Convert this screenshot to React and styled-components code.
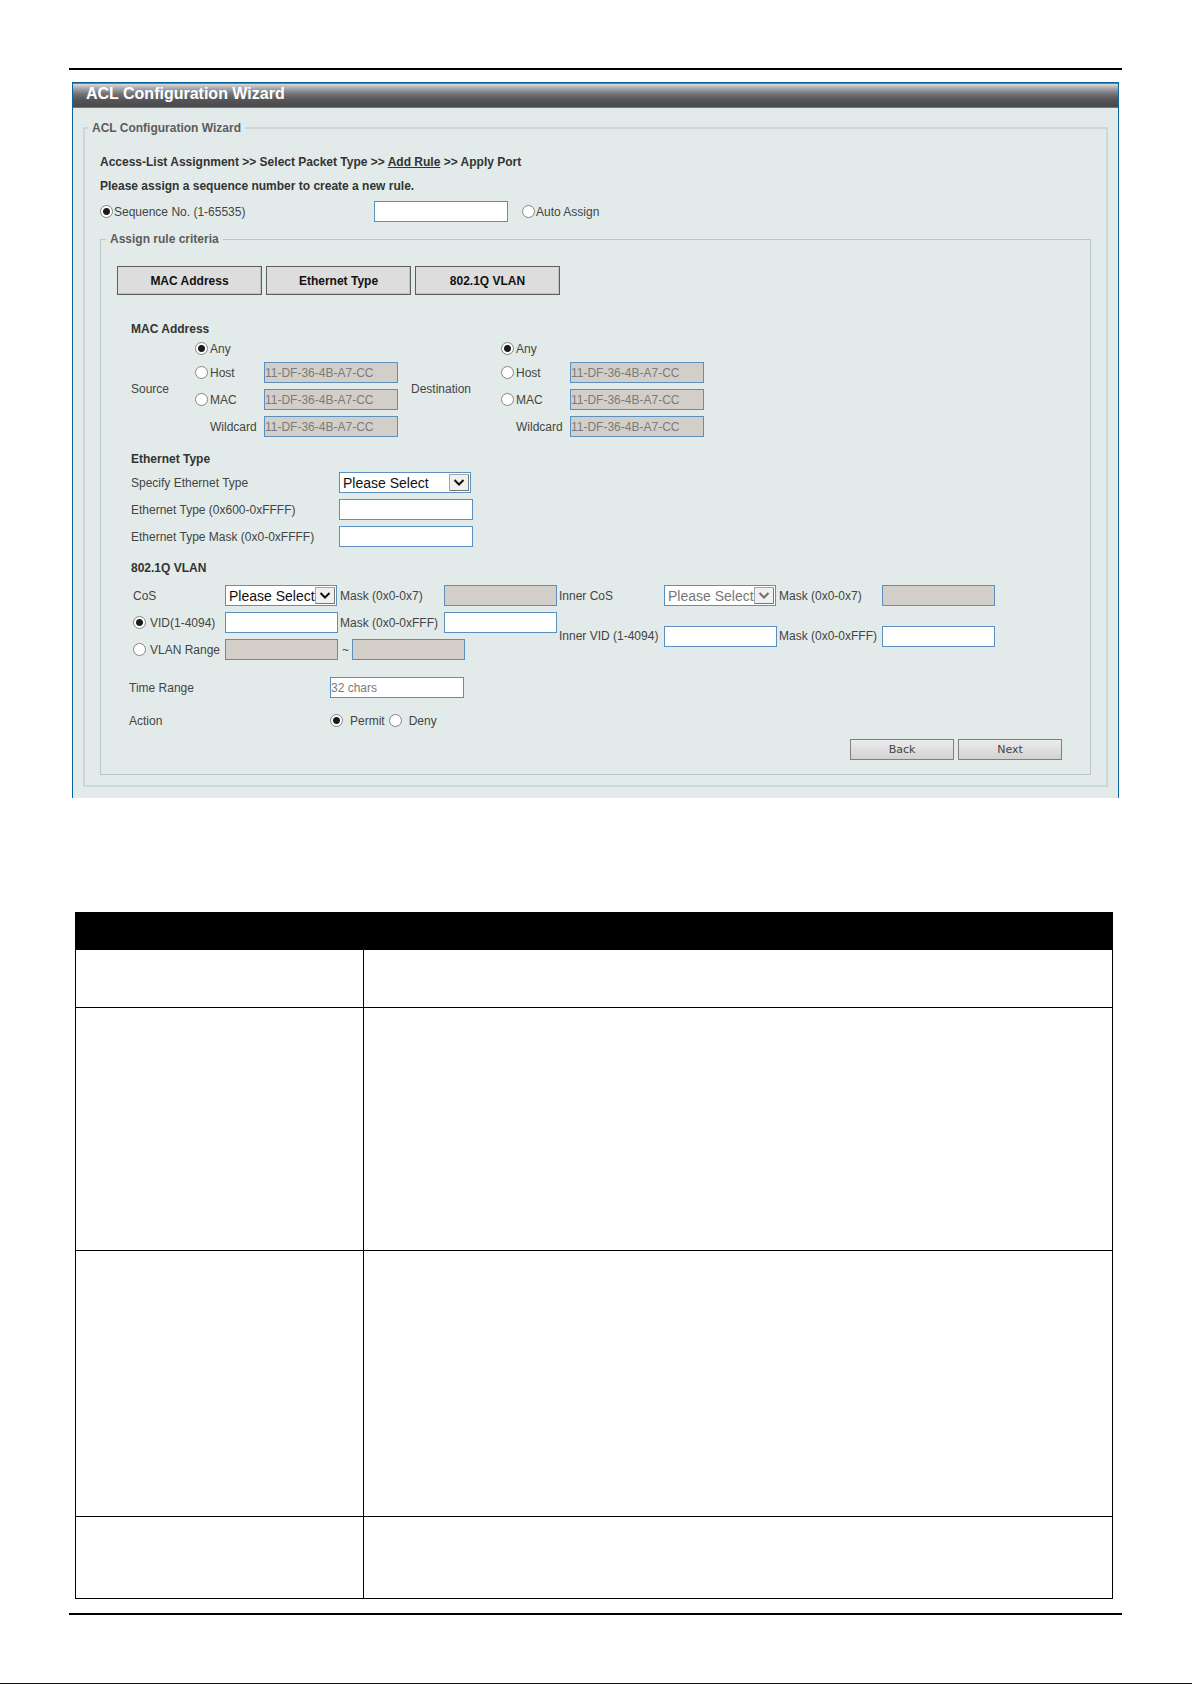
import React from "react";
import styled, { createGlobalStyle, css } from "styled-components";

const GlobalStyle = createGlobalStyle`
  * {
    box-sizing: border-box;
  }
  body {
    margin: 0;
    background: #fff;
    color: #444;
    font-family: "Liberation Sans", Arial, sans-serif;
    font-size: 12px;
  }
`;

const Page = styled.div`
  padding-top: 68px;
  border-bottom: 1px solid #111;
`;
const Sheet = styled.main`
  margin: 0 70px 68px 69px;
  border-top: 2px solid #000;
  border-bottom: 2px solid #000;
  padding-bottom: 14px;
`;

const Panel = styled.section`
  margin: 12px 3px 0;
  padding-bottom: 11px;
  border: 1px solid #0a649c;
  border-bottom: none;
  background: #e2ebe9;
`;
const TitleBar = styled.h1`
  margin: 0;
  height: 25px;
  padding-left: 13px;
  border-top: 1px solid #77777a;
  border-bottom: 1px solid #77757a;
  background: linear-gradient(
    #dcdcde 0%,
    #aaaaae 18%,
    #747478 42%,
    #545456 70%,
    #4a4a4c 100%
  );
  color: #fff;
  font-size: 16px;
  line-height: 20px;
`;

const Group = styled.fieldset`
  margin: 12px 10px 0;
  padding: 14px 15px 10px 15px;
  border: 2px solid #ccd8d7;
  min-width: 0;
`;
const Criteria = styled.fieldset`
  margin: 9px 0 0;
  padding: 19px 28px 14px;
  border: 1px solid #b9c8c7;
  min-width: 0;
`;
const Legend = styled.legend`
  margin-left: ${props => props.$indent};
  padding: 0 4px;
  color: #5c5c5c;
  font-weight: bold;
  line-height: 16px;
`;

const Line = styled.p`
  margin: 0;
  color: #333;
  font-weight: bold;
  line-height: 24px;
`;
const Step = styled.a`
  color: inherit;
`;

const SequenceRow = styled.div`
  display: grid;
  grid-template-columns: 274px 148px 1fr;
  align-items: center;
  margin-top: 3px;
`;
const RadioLabel = styled.label`
  display: flex;
  align-items: center;
  gap: ${props => props.$gap || "2px"};
  white-space: nowrap;
`;
const Radio = styled.input.attrs({ type: "radio" })`
  appearance: none;
  flex: none;
  width: 13px;
  height: 13px;
  margin: 0;
  border: 1px solid #858585;
  border-radius: 50%;
  background: #fff;
  &:checked {
    background: radial-gradient(circle, #1c1c1c 3px, #fff 4px);
  }
`;

const field = css`
  height: 21px;
  border: 1px solid #5b8fbd;
  border-radius: 0;
  background: #fff;
  font-family: inherit;
`;
const Input = styled.input`
  ${field}
  width: ${props => (props.$short ? "113px" : "134px")};
  padding: 0;
  color: #444;
  font-size: 12px;
  &::placeholder {
    color: #7b7b7b;
    opacity: 1;
  }
  &:disabled {
    background: #d4cec8;
  }
`;
const SelectBox = styled.div`
  position: relative;
  width: ${props => (props.$short ? "112px" : "132px")};
  color: #111;
  svg {
    position: absolute;
    top: 2px;
    right: 2px;
    pointer-events: none;
  }
`;
const NativeSelect = styled.select`
  ${field}
  appearance: none;
  display: block;
  width: 100%;
  padding: 0 0 0 3px;
  color: #111;
  font-size: 14px;
  &:disabled {
    color: #777;
    opacity: 1;
  }
`;

const Tabs = styled.div`
  display: flex;
  gap: 4px;
  margin: 0 -12px 22px;
`;
const Tab = styled.button`
  width: 145px;
  height: 29px;
  padding: 0;
  border: 1px solid #5e5e60;
  box-shadow: inset -1px -1px 0 #c2c2c2;
  background: #dddddd;
  color: #111;
  font-family: inherit;
  font-size: 12px;
  font-weight: bold;
`;

const Block = styled.section`
  margin: 0 0 9px 2px;
`;
const Heading = styled.h2`
  margin: 0;
  color: #333;
  font-size: 12px;
  line-height: 24px;
`;
const MacGrid = styled.div`
  display: grid;
  grid-template-columns: 64px 69px 147px 90px 69px 135px;
  grid-template-rows: 15px repeat(3, 21px);
  grid-auto-flow: column;
  row-gap: 6px;
  align-items: center;
  padding-bottom: 1px;
`;
const Tall = styled.div`
  grid-row: 1 / -1;
`;
const MacLabel = styled.label`
  padding-left: 15px;
`;
const EtherGrid = styled.div`
  display: grid;
  grid-template-columns: 208px 135px;
  grid-auto-rows: 21px;
  row-gap: 6px;
  align-items: center;
  padding-top: 1px;
`;
const VlanGrid = styled.div`
  display: grid;
  grid-template-columns: 94px 115px 104px 115px 105px 115px 103px 114px;
  grid-template-rows: repeat(3, 21px);
  row-gap: 6px;
  align-items: center;
  margin-top: 5px;
  white-space: nowrap;
`;
const Cell = styled.div`
  display: flex;
  align-items: center;
  grid-column: ${props => props.$col};
  grid-row: ${props => props.$row};
  padding-left: ${props => (props.$inset ? "2px" : "0")};
`;
const Tilde = styled.span`
  width: 12px;
  padding-left: 2px;
`;

const FormRow = styled.div`
  display: grid;
  grid-template-columns: 201px 1fr;
  align-items: center;
  height: 21px;
  margin-top: ${props => props.$top};
`;
const Choices = styled.div`
  display: flex;
  gap: 4px;
`;
const Actions = styled.div`
  display: flex;
  justify-content: flex-end;
  gap: 4px;
  margin-top: 8px;
`;
const Button = styled.button`
  width: 104px;
  height: 21px;
  padding: 0;
  border: 1px solid #808083;
  background: linear-gradient(#ececec, #d2d2d2);
  color: #444;
  font-family: "DejaVu Sans", Verdana, sans-serif;
  font-size: 11px;
`;

const ParamTable = styled.table`
  width: calc(100% - 15px);
  margin: 114px 9px 0 6px;
  border-collapse: collapse;
  table-layout: fixed;
  th {
    padding: 0;
    background: #000;
    border: 1px solid #000;
  }
  td {
    padding: 0;
    border: 1px solid #000;
  }
`;
const NameCol = styled.col`
  width: 288px;
`;
const Row = styled.tr`
  height: ${props => props.$height}px;
`;

const Select = ({ id, short, disabled }) => (
  <SelectBox $short={short}>
    <NativeSelect id={id} disabled={disabled}>
      <option>Please Select</option>
    </NativeSelect>
    <svg width="20" height="17" viewBox="0 0 20 17">
      <rect x="0.5" y="0.5" width="19" height="16" fill="#f0f0f0" stroke="#a5a5a5" />
      <path d="M1 16.5H19.5V1" fill="none" stroke="#777" />
      <path
        d="M5.5 6L10 10.5L14.5 6"
        fill="none"
        stroke={disabled ? "#6d6d6d" : "#111"}
        strokeWidth="2"
      />
    </svg>
  </SelectBox>
);

const MacFields = ({ side }) => {
  const id = side.toLowerCase();
  return (
    <>
      <Tall>{side}</Tall>
      <RadioLabel>
        <Radio name={id} defaultChecked />
        Any
      </RadioLabel>
      <RadioLabel>
        <Radio name={id} />
        Host
      </RadioLabel>
      <RadioLabel>
        <Radio name={id} />
        MAC
      </RadioLabel>
      <MacLabel htmlFor={`${id}-wildcard`}>Wildcard</MacLabel>
      <span />
      <Input disabled aria-label={`${side} host`} placeholder="11-DF-36-4B-A7-CC" />
      <Input disabled aria-label={`${side} MAC`} placeholder="11-DF-36-4B-A7-CC" />
      <Input disabled id={`${id}-wildcard`} placeholder="11-DF-36-4B-A7-CC" />
    </>
  );
};

const rowHeights = [58, 243, 266, 82];

const App = () => {
  return (
    <Page>
      <GlobalStyle />
      <Sheet>
        <Panel>
          <TitleBar>ACL Configuration Wizard</TitleBar>
          <Group>
            <Legend $indent="-12px">ACL Configuration Wizard</Legend>
            <Line>
              Access-List Assignment &gt;&gt; Select Packet Type &gt;&gt;{" "}
              <Step href="#rule">Add Rule</Step> &gt;&gt; Apply Port
            </Line>
            <Line>Please assign a sequence number to create a new rule.</Line>
            <SequenceRow>
              <RadioLabel $gap="1px">
                <Radio name="sequence" defaultChecked />
                Sequence No. (1-65535)
              </RadioLabel>
              <Input aria-label="Sequence No." />
              <RadioLabel $gap="1px">
                <Radio name="sequence" />
                Auto Assign
              </RadioLabel>
            </SequenceRow>
            <Criteria id="rule">
              <Legend $indent="-23px">Assign rule criteria</Legend>
              <Tabs>
                <Tab type="button">MAC Address</Tab>
                <Tab type="button">Ethernet Type</Tab>
                <Tab type="button">802.1Q VLAN</Tab>
              </Tabs>
              <Block>
                <Heading>MAC Address</Heading>
                <MacGrid>
                  <MacFields side="Source" />
                  <MacFields side="Destination" />
                </MacGrid>
              </Block>
              <Block>
                <Heading>Ethernet Type</Heading>
                <EtherGrid>
                  <label htmlFor="ether-select">Specify Ethernet Type</label>
                  <Select id="ether-select" />
                  <label htmlFor="ether-type">Ethernet Type (0x600-0xFFFF)</label>
                  <Input id="ether-type" />
                  <label htmlFor="ether-mask">Ethernet Type Mask (0x0-0xFFFF)</label>
                  <Input id="ether-mask" />
                </EtherGrid>
              </Block>
              <Block>
                <Heading>802.1Q VLAN</Heading>
                <VlanGrid>
                  <Cell $col="1" $row="1" $inset>
                    <label htmlFor="cos">CoS</label>
                  </Cell>
                  <Cell $col="2" $row="1">
                    <Select id="cos" short />
                  </Cell>
                  <Cell $col="3" $row="1">
                    <label htmlFor="cos-mask">Mask (0x0-0x7)</label>
                  </Cell>
                  <Cell $col="4" $row="1">
                    <Input id="cos-mask" $short disabled />
                  </Cell>
                  <Cell $col="5" $row="1">
                    <label htmlFor="inner-cos">Inner CoS</label>
                  </Cell>
                  <Cell $col="6" $row="1">
                    <Select id="inner-cos" short disabled />
                  </Cell>
                  <Cell $col="7" $row="1">
                    <label htmlFor="inner-cos-mask">Mask (0x0-0x7)</label>
                  </Cell>
                  <Cell $col="8" $row="1">
                    <Input id="inner-cos-mask" $short disabled />
                  </Cell>

                  <Cell $col="1" $row="2" $inset>
                    <RadioLabel $gap="4px">
                      <Radio name="vlan" defaultChecked />
                      VID(1-4094)
                    </RadioLabel>
                  </Cell>
                  <Cell $col="2" $row="2">
                    <Input aria-label="VID" $short />
                  </Cell>
                  <Cell $col="3" $row="2">
                    <label htmlFor="vid-mask">Mask (0x0-0xFFF)</label>
                  </Cell>
                  <Cell $col="4" $row="2">
                    <Input id="vid-mask" $short />
                  </Cell>
                  <Cell $col="5" $row="2 / 4">
                    <label htmlFor="inner-vid">Inner VID (1-4094)</label>
                  </Cell>
                  <Cell $col="6" $row="2 / 4">
                    <Input id="inner-vid" $short />
                  </Cell>
                  <Cell $col="7" $row="2 / 4">
                    <label htmlFor="inner-vid-mask">Mask (0x0-0xFFF)</label>
                  </Cell>
                  <Cell $col="8" $row="2 / 4">
                    <Input id="inner-vid-mask" $short />
                  </Cell>

                  <Cell $col="1" $row="3" $inset>
                    <RadioLabel $gap="4px">
                      <Radio name="vlan" />
                      VLAN Range
                    </RadioLabel>
                  </Cell>
                  <Cell $col="2" $row="3">
                    <Input aria-label="VLAN from" $short disabled />
                  </Cell>
                  <Cell $col="3 / 5" $row="3">
                    <Tilde>~</Tilde>
                    <Input aria-label="VLAN to" $short disabled />
                  </Cell>
                </VlanGrid>
              </Block>
              <FormRow $top="17px">
                <label htmlFor="time-range">Time Range</label>
                <Input id="time-range" placeholder="32 chars" />
              </FormRow>
              <FormRow $top="12px">
                <span>Action</span>
                <Choices>
                  <RadioLabel $gap="7px">
                    <Radio name="action" defaultChecked />
                    Permit
                  </RadioLabel>
                  <RadioLabel $gap="7px">
                    <Radio name="action" />
                    Deny
                  </RadioLabel>
                </Choices>
              </FormRow>
              <Actions>
                <Button type="button">Back</Button>
                <Button type="button">Next</Button>
              </Actions>
            </Criteria>
          </Group>
        </Panel>
        <ParamTable>
          <colgroup>
            <NameCol />
            <col />
          </colgroup>
          <thead>
            <Row $height={37}>
              <th />
              <th />
            </Row>
          </thead>
          <tbody>
            {rowHeights.map(height => (
              <Row key={height} $height={height}>
                <td />
                <td />
              </Row>
            ))}
          </tbody>
        </ParamTable>
      </Sheet>
    </Page>
  );
};

export default App;
